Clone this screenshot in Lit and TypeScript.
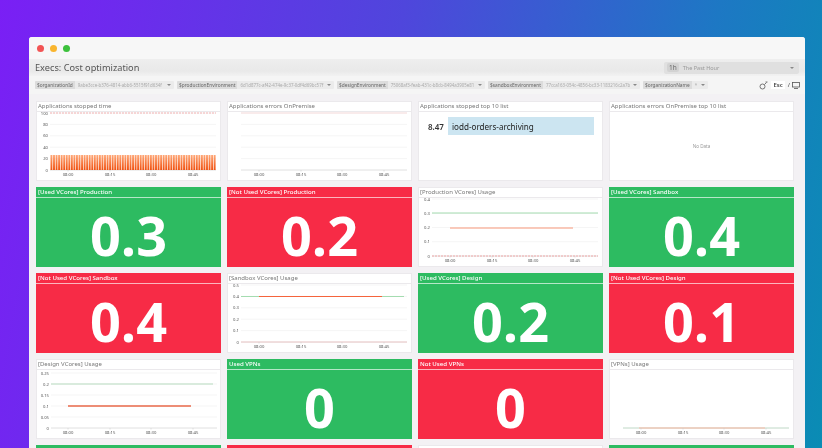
import { LitElement, html, css, svg } from "lit";
import { customElement } from "lit/decorators.js";

const W = 183;
const H = 68;
const BASE = 58;

type Line = { y: number; x1: number; x2: number; color: string; w?: number };
type Chart = {
  title: string;
  left: number;
  top?: number;
  ticks: string[];
  lines: Line[];
  bars?: boolean;
  noYLabels?: boolean;
};

const GREEN = "#a4dcb0";
const ORANGE = "#f5643c";
const PEACH = "#f9b8a4";
const DASH = "#f0a0a0";

@customElement("mini-chart")
export class MiniChart extends LitElement {
  static properties = { chart: { attribute: false } };
  declare chart: Chart;

  static styles = css`
    :host {
      display: block;
    }
    svg {
      display: block;
      width: 100%;
      height: 100%;
    }
    text {
      font: 4.2px "Noto Sans", sans-serif;
      fill: #555;
    }
  `;

  render() {
    const c = this.chart;
    const top = c.top ?? 1;
    const n = c.ticks.length - 1;
    const step = n > 0 ? (BASE - top) / n : 0;
    const right = c.left + 166;
    const times = ["08:00", "08:15", "08:30", "08:45"];
    const xs = [31, 73, 114, 156];
    const bars: number[] = [];
    if (c.bars) for (let x = c.left + 0.5; x < right; x += 2.55) bars.push(x);
    return html`<svg viewBox="0 0 ${W} ${H}">
      <defs>
        <linearGradient id="b" x1="0" y1="0" x2="0" y2="1">
          <stop offset="0" stop-color="#ffa878" />
          <stop offset="1" stop-color="#f0500f" />
        </linearGradient>
      </defs>
      ${c.ticks.map((t, i) => {
        const y = BASE - i * step;
        return svg`
          <line x1=${c.left} x2=${right} y1=${y} y2=${y} stroke=${i ? "#f2f2f2" : "#d8d8d8"} stroke-width="0.8" />
          ${c.noYLabels ? "" : svg`<text x=${c.left - 2} y=${y + 1.5} text-anchor="end">${t}</text>`}
        `;
      })}
      ${bars.map(
        (x) => svg`<rect x=${x} y=${BASE - 15} width="1.9" height="15" fill="url(#b)" />`
      )}
      ${c.lines.map(
        (l) => svg`<line x1=${l.x1} x2=${l.x2} y1=${l.y} y2=${l.y} stroke=${l.color} stroke-width=${l.w ?? 1}
          stroke-dasharray=${l.color === DASH ? "2 1" : "none"} />`
      )}
      ${xs.map(
        (x, i) => svg`
          <line x1=${x} x2=${x} y1=${BASE} y2=${BASE + 1.5} stroke="#ccc" stroke-width="0.6" />
          <text x=${x} y=${BASE + 6} text-anchor="middle">${times[i]}</text>`
      )}
    </svg>`;
  }
}

const charts: Record<string, Chart> = {
  stopped: {
    title: "Applications stopped time",
    left: 13,
    ticks: ["0", "20", "40", "60", "80", "100"],
    bars: true,
    lines: [{ y: 1, x1: 13, x2: 179, color: DASH, w: 0.8 }],
  },
  errors: {
    title: "Applications errors OnPremise",
    left: 13,
    ticks: ["0", "", "", "", "", ""],
    noYLabels: true,
    lines: [{ y: 1, x1: 13, x2: 179, color: "#f8d4d4", w: 0.8 }],
  },
  production: {
    title: "[Production VCores] Usage",
    left: 13,
    ticks: ["0", "0.1", "0.2", "0.3", "0.4"],
    lines: [
      { y: 15, x1: 13, x2: 179, color: GREEN },
      { y: 30, x1: 31, x2: 154, color: PEACH, w: 1.4 },
      { y: 58, x1: 13, x2: 179, color: DASH, w: 0.9 },
    ],
  },
  sandbox: {
    title: "[Sandbox VCores] Usage",
    left: 13,
    ticks: ["0", "0.1", "0.2", "0.3", "0.4", "0.5"],
    lines: [
      { y: 12.5, x1: 13, x2: 176, color: GREEN, w: 1.2 },
      { y: 12.5, x1: 31, x2: 154, color: ORANGE, w: 1.2 },
      { y: 58, x1: 13, x2: 179, color: "#f0c8c8", w: 0.9 },
    ],
  },
  design: {
    title: "[Design VCores] Usage",
    left: 14,
    top: 3,
    ticks: ["0", "0.05", "0.1", "0.15", "0.2", "0.25"],
    lines: [
      { y: 14, x1: 14, x2: 176, color: "#b8dcc0" },
      { y: 36, x1: 31, x2: 154, color: "#e8684a", w: 1.3 },
    ],
  },
  vpns: {
    title: "[VPNs] Usage",
    left: 13,
    ticks: ["0"],
    noYLabels: true,
    lines: [
      { y: 58, x1: 13, x2: 179, color: "#cfe8d6" },
      { y: 58, x1: 29, x2: 155, color: PEACH },
    ],
  },
};

@customElement("app-root")
export class AppRoot extends LitElement {
  static styles = css`
    :host {
      display: block;
      width: 822px;
      height: 448px;
      overflow: hidden;
      font-family: "Noto Sans", sans-serif;
      background: linear-gradient(100deg, #7a1ff5 0%, #4f46dc 45%, #1d78c4 80%, #0a8cb4 100%);
    }
    .window {
      margin-left: 29px;
      width: 776px;
      height: 411px;
      position: relative;
      top: 37px;
      background: #f3f1f4;
      border-radius: 3px 3px 0 0;
      overflow: hidden;
      display: flex;
      flex-direction: column;
      filter: blur(0.3px);
    }
    .titlebar {
      height: 22px;
      flex: none;
      background: #f7f7f7;
      display: flex;
      align-items: center;
      gap: 6px;
      padding-left: 8px;
    }
    .dot {
      width: 7px;
      height: 7px;
      border-radius: 50%;
    }
    .header {
      height: 17px;
      flex: none;
      background: linear-gradient(#eeeeee, #e9e9e9 70%, #f2f2f2);
      display: flex;
      align-items: center;
      justify-content: space-between;
      padding: 0 6px;
    }
    h1 {
      margin: 0;
      font-size: 9.2px;
      font-weight: 400;
      color: #555;
    }
    .range {
      width: 135px;
      height: 12px;
      background: #e0e0e0;
      border-radius: 2px;
      display: flex;
      align-items: center;
      box-sizing: border-box;
      padding: 0 5px 0 3px;
      font-size: 5.5px;
      color: #999;
      gap: 4px;
    }
    .range b {
      background: #d2d2d2;
      color: #666;
      padding: 0 2px;
      border-radius: 2px;
      font-weight: 400;
      font-size: 6.5px;
    }
    .range i {
      margin-left: auto;
    }
    .caret {
      width: 0;
      height: 0;
      border: 2px solid transparent;
      border-top: 2.5px solid #888;
      border-bottom: 0;
      flex: none;
    }
    .toolbar {
      height: 18px;
      flex: none;
      background: #f5f5f5;
      display: flex;
      align-items: center;
      padding: 0 5px 0 6px;
      box-sizing: border-box;
      font-size: 4.4px;
      gap: 3px;
    }
    .var {
      display: flex;
      align-items: center;
      height: 8px;
      background: #ebebeb;
      border-radius: 1px;
      color: #aaa;
      white-space: nowrap;
      overflow: hidden;
      flex: none;
    }
    .var span:first-child {
      background: #dcdcdc;
      color: #666;
      height: 100%;
      display: flex;
      align-items: center;
      padding: 0 2px;
      font-size: 4.8px;
    }
    .var span:nth-child(2) {
      padding: 0 3px;
      flex: 1;
      overflow: hidden;
    }
    .var .caret {
      margin-right: 3px;
    }
    .tools {
      margin-left: auto;
      display: flex;
      align-items: center;
      gap: 2px;
      color: #444;
      font-size: 6px;
    }
    .tools kbd {
      font: inherit;
      font-weight: 600;
      background: #fff;
      padding: 0 2px;
      margin: 0 1px;
    }
    .grid {
      flex: 1;
      display: grid;
      grid-template-columns: repeat(4, 185px);
      grid-auto-rows: 80px;
      gap: 6px;
      padding: 7px 0 0 7px;
      align-content: start;
    }
    .panel {
      background: #fff;
      border: 1px solid #ebe9ec;
      box-sizing: border-box;
      display: flex;
      flex-direction: column;
      overflow: hidden;
    }
    .panel header {
      height: 9px;
      flex: none;
      font-size: 6px;
      line-height: 9px;
      color: #777;
      padding-left: 1px;
      white-space: nowrap;
      border-bottom: 1px solid #ebe9ec;
    }
    mini-chart {
      flex: 1;
      min-height: 0;
    }
    .nodata {
      flex: 1;
      display: flex;
      align-items: center;
      justify-content: center;
      font-size: 4.6px;
      color: #999;
    }
    .top {
      display: flex;
      align-items: center;
      gap: 4px;
      margin: 5px 8px 0 9px;
      font-weight: 600;
      font-size: 8px;
      color: #333;
    }
    .top div {
      flex: 1;
      height: 18px;
      background: #cce5f1;
      display: flex;
      align-items: center;
      padding-left: 4px;
      font-weight: 400;
      font-size: 8.1px;
      color: #222;
    }
    .stat {
      display: flex;
      flex-direction: column;
      color: #fff;
    }
    .stat.ok {
      background: #2dbb61;
    }
    .stat.bad {
      background: #f72b46;
    }
    .stat header {
      height: 10px;
      flex: none;
      font-size: 6.1px;
      line-height: 10px;
      padding-left: 2px;
      font-weight: 500;
      border-bottom: 1px solid rgba(255, 255, 255, 0.65);
      white-space: nowrap;
    }
    .stat div {
      flex: 1;
      display: flex;
      align-items: center;
      justify-content: center;
      padding-top: 4px;
      box-sizing: border-box;
      font-size: 54px;
      font-weight: 700;
      line-height: 40px;
      font-family: "Open Sans", "Noto Sans", sans-serif;
    }
  `;

  variable(name: string, value: string, width: number) {
    return html`<div class="var" style="width:${width}px">
      <span>${name}</span><span>${value}</span><i class="caret"></i>
    </div>`;
  }

  chart(key: string) {
    const c = charts[key];
    return html`<div class="panel">
      <header>${c.title}</header>
      <mini-chart .chart=${c}></mini-chart>
    </div>`;
  }

  stat(title: string, value: string, ok: boolean) {
    return html`<div class="stat ${ok ? "ok" : "bad"}">
      <header>${title}</header>
      <div>${value}</div>
    </div>`;
  }

  render() {
    return html`<div class="window">
      <div class="titlebar">
        <span class="dot" style="background:#f25454"></span>
        <span class="dot" style="background:#f9b52e"></span>
        <span class="dot" style="background:#3cc13c"></span>
      </div>
      <div class="header">
        <h1>Execs: Cost optimization</h1>
        <div class="range"><b>1h</b><span>The Past Hour</span><i class="caret"></i></div>
      </div>
      <div class="toolbar">
        ${this.variable("$organizationId", "9abe3cce-b376-4814-abb6-5515f91d634f", 139)}
        ${this.variable("$productionEnvironment", "6d1d877c-af42-474e-9c37-0df4d69bc57f", 157)}
        ${this.variable("$designEnvironment", "75068af3-feab-431c-b8cb-8494a3905e81", 148)}
        ${this.variable("$sandboxEnvironment", "77cca163-054c-4856-bc33-1183216c2a7b", 152)}
        ${this.variable("$organizationName", "*", 65)}
        <div class="tools">
          <svg width="9" height="9" viewBox="0 0 9 9" fill="none" stroke="#555" stroke-width="0.8">
            <circle cx="3.5" cy="5.5" r="2.5" />
            <path d="M5.5 3.5 7.5 1.5M6.5 1h2" />
          </svg>
          <kbd>Esc</kbd><span>/</span>
          <svg width="8" height="7" viewBox="0 0 8 7" fill="none" stroke="#555" stroke-width="0.8">
            <rect x="0.5" y="0.5" width="7" height="4.5" />
            <path d="M2 6.5h4" />
          </svg>
        </div>
      </div>
      <div class="grid">
        ${this.chart("stopped")} ${this.chart("errors")}
        <div class="panel">
          <header>Applications stopped top 10 list</header>
          <div class="top"><span>8.47</span><div>iodd-orders-archiving</div></div>
        </div>
        <div class="panel">
          <header>Applications errors OnPremise top 10 list</header>
          <div class="nodata">No Data</div>
        </div>

        ${this.stat("[Used VCores] Production", "0.3", true)}
        ${this.stat("[Not Used VCores] Production", "0.2", false)}
        ${this.chart("production")}
        ${this.stat("[Used VCores] Sandbox", "0.4", true)}

        ${this.stat("[Not Used VCores] Sandbox", "0.4", false)}
        ${this.chart("sandbox")}
        ${this.stat("[Used VCores] Design", "0.2", true)}
        ${this.stat("[Not Used VCores] Design", "0.1", false)}

        ${this.chart("design")}
        ${this.stat("Used VPNs", "0", true)}
        ${this.stat("Not Used VPNs", "0", false)}
        ${this.chart("vpns")}

        ${this.stat("", "", true)} ${this.stat("", "", false)}
        <div class="panel"></div>
        ${this.stat("", "", true)}
      </div>
    </div>`;
  }
}
